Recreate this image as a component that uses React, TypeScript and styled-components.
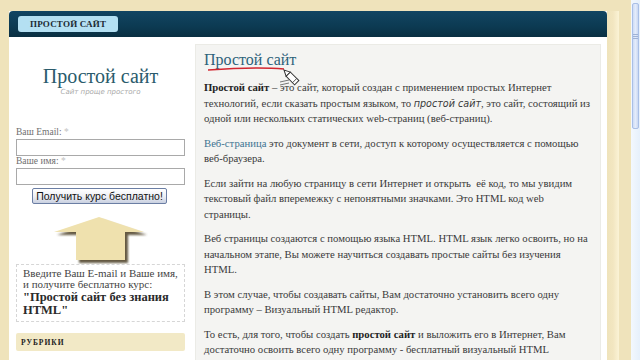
import React from "react";
import styled, { createGlobalStyle } from "styled-components";

const Global = createGlobalStyle`
  html, body { margin: 0; padding: 0; }
  body { width: 640px; height: 360px; overflow: hidden; background: #efe3bb; }
`;

const Screen = styled.div`
  display: flex;
  width: 640px;
  height: 360px;
  overflow: hidden;
  font-family: "Liberation Serif", "DejaVu Serif", serif;
`;

const LeftEdge = styled.div`
  width: 3px;
  background: linear-gradient(90deg, #8a9bd0, #5f72b0);
`;

const Page = styled.div`
  flex: 1;
  display: flex;
  padding: 11px 12px 0 9px;
  background: #efe3bb;
`;

const Wrapper = styled.div`
  width: 598px;
  display: flex;
  flex-direction: column;
  background: #fff;
  overflow: hidden;
`;

const Header = styled.div`
  flex-shrink: 0;
  height: 26px;
  display: flex;
  align-items: center;
  padding-left: 9px;
  border-radius: 4px 4px 0 0;
  background: linear-gradient(180deg, #124562 0%, #0c3a52 60%, #0a2f42 100%);
`;

const Tab = styled.div`
  height: 16px;
  padding: 0 12px;
  display: flex;
  align-items: center;
  border-radius: 3px;
  background: #b4e0f2;
  color: #1b2a33;
  font-size: 9px;
  font-weight: bold;
  letter-spacing: 0.2px;
`;

const Body = styled.div`
  flex: 1;
  display: grid;
  grid-template-columns: 186px 406px;
  align-items: start;
  padding-top: 7px;
`;

const Sidebar = styled.div`
  display: flex;
  flex-direction: column;
  padding: 20px 10px 0 7px;
`;

const SiteTitle = styled.div`
  text-align: center;
  font-size: 20px;
  color: #2a5b6c;
  line-height: 24px;
`;

const Slogan = styled.div`
  text-align: center;
  font-family: "DejaVu Sans", sans-serif;
  font-style: italic;
  font-size: 7px;
  color: #a9a9a9;
  margin-bottom: 31px;
`;

const Label = styled.div`
  font-size: 9.5px;
  color: #6f6f6f;
  line-height: 11px;
  span { color: #c3c3c3; }
`;

const Input = styled.div`
  height: 15px;
  border: 1px solid #a9a9a9;
  background: #fff;
  margin: 1px 0 0;
`;

const Button = styled.div`
  align-self: center;
  margin: 3px 0 0 -2px;
  width: 133px;
  height: 14px;
  border: 1px solid #6b7ea4;
  border-radius: 2px;
  background: linear-gradient(180deg, #ffffff 0%, #eceef4 55%, #c9d0e0 100%);
  font-family: "Liberation Sans", Arial, sans-serif;
  font-size: 10.5px;
  line-height: 14px;
  text-align: center;
  color: #111;
`;

const ArrowWrap = styled.div`
  height: 48px;
  margin-top: 12px;
  display: flex;
  justify-content: center;
`;

const Promo = styled.div`
  border: 1px dashed #d6d6d6;
  padding: 3px 6px 4px;
  font-size: 11px;
  line-height: 11px;
  color: #444;
  b {
    display: block;
    font-size: 12.5px;
    line-height: 13px;
    color: #2a2a2a;
    margin-top: 1px;
  }
`;

const Rubric = styled.div`
  margin-top: 11px;
  height: 18px;
  display: flex;
  align-items: center;
  padding-left: 5px;
  border-radius: 2px;
  background: #f2e9c6;
  font-size: 7.5px;
  font-weight: bold;
  letter-spacing: 1px;
  color: #222;
`;

const Content = styled.div`
  position: relative;
  height: 400px;
  background: #f4f4f2;
  border: 1px solid #ebebe6;
  border-bottom: none;
  padding: 4px 2px 0 8px;
`;

const Title = styled.h1`
  margin: 0 0 9px;
  font-size: 16px;
  font-weight: normal;
  line-height: 22px;
  color: #2d627a;
`;

const P = styled.p`
  margin: 0 0 9px;
  font-size: 10.7px;
  line-height: 15.5px;
  color: #3a3a3a;
  white-space: nowrap;
  b { color: #222; }
  i { font-family: "DejaVu Sans", sans-serif; font-size: 9.6px; }
  a { color: #3d7391; text-decoration: none; }
`;

const Marks = styled.svg`
  position: absolute;
  left: 0;
  top: 0;
  overflow: visible;
`;

const Gutter = styled.div`
  width: 12px;
  background: linear-gradient(90deg, #efe3bb 0%, #f2e6c0 50%, #fbf3d6 100%);
`;

const Scrollbar = styled.div`
  width: 18px;
  display: flex;
  background: #eef5fd;
`;

const Track = styled.div`
  flex: 1;
  padding: 3px 1px 0 1px;
  background: linear-gradient(90deg, #f3f8fe, #e6f0fb);
`;

const Thumb = styled.div`
  height: 124px;
  border: 1px solid #a9bfe6;
  border-radius: 2px;
  background: linear-gradient(90deg, #cddcf7, #e4ecfb 50%, #c9d8f3);
  display: flex;
  align-items: center;
  justify-content: center;
  &::after {
    content: "";
    width: 5px;
    height: 5px;
    margin-top: -60px;
    background: repeating-linear-gradient(180deg, #9fb2d6 0 1px, transparent 1px 2px);
  }
`;

const DarkEdge = styled.div`
  width: 4px;
  background: #4a5a86;
`;

const Arrow = () => (
  <svg width="100" height="48" viewBox="0 0 100 48">
    <defs>
      <filter id="sh" x="-20%" y="-20%" width="150%" height="150%">
        <feGaussianBlur stdDeviation="1" />
      </filter>
    </defs>
    <polygon
      points="3,16 48,1 93,16 74,16 74,44 25,44 25,16"
      fill="#4a3c22"
      transform="translate(3,3)"
      filter="url(#sh)"
      opacity="0.85"
    />
    <polygon points="3,16 48,1 93,16 74,16 74,44 25,44 25,16" fill="#efe1ae" />
  </svg>
);

// pencil with its tip at the origin, body running down-right
const Pencil = () => (
  <g transform="translate(88,25) rotate(-45)">
    <polygon points="0,0 -3,6 3,6" fill="#fff" stroke="#333" strokeWidth="1" />
    <rect x="-3" y="6" width="6" height="12" fill="#fff" stroke="#333" strokeWidth="1" />
    <line x1="-3" y1="15" x2="3" y2="15" stroke="#333" strokeWidth="0.8" />
  </g>
);

export default function App() {
  return (
    <>
      <Global />
      <Screen>
        <LeftEdge />
        <Page>
          <Wrapper>
            <Header>
              <Tab>ПРОСТОЙ САЙТ</Tab>
            </Header>
            <Body>
              <Sidebar>
                <SiteTitle>Простой сайт</SiteTitle>
                <Slogan>Сайт проще простого</Slogan>
                <Label>
                  Ваш Email: <span>*</span>
                </Label>
                <Input />
                <Label>
                  Ваше имя: <span>*</span>
                </Label>
                <Input />
                <Button>Получить курс бесплатно!</Button>
                <ArrowWrap>
                  <Arrow />
                </ArrowWrap>
                <Promo>
                  Введите Ваш E-mail и Ваше имя, и получите бесплатно курс:
                  <b>"Простой сайт без знания HTML"</b>
                </Promo>
                <Rubric>РУБРИКИ</Rubric>
              </Sidebar>
              <Content>
                <Title>Простой сайт</Title>
                <P>
                  <b>Простой сайт</b> – это сайт, который создан с применением простых Интернет
                  <br />
                  технологий, если сказать простым языком, то <i>простой сайт</i>, это сайт, состоящий из
                  <br />
                  одной или нескольких статических web-страниц (веб-страниц).
                </P>
                <P>
                  <a>Веб-страница</a> это документ в сети, доступ к которому осуществляется с помощью
                  <br />
                  веб-браузера.
                </P>
                <P>
                  Если зайти на любую страницу в сети Интернет и открыть&nbsp; её код, то мы увидим
                  <br />
                  текстовый файл вперемежку с непонятными значками. Это HTML код web
                  <br />
                  страницы.
                </P>
                <P>
                  Веб страницы создаются с помощью языка HTML. HTML язык легко освоить, но на
                  <br />
                  начальном этапе, Вы можете научиться создавать простые сайты без изучения
                  <br />
                  HTML.
                </P>
                <P>
                  В этом случае, чтобы создавать сайты, Вам достаточно установить всего одну
                  <br />
                  программу – Визуальный HTML редактор.
                </P>
                <P>
                  То есть, для того, чтобы создать <b>простой сайт</b> и выложить его в Интернет, Вам
                  <br />
                  достаточно освоить всего одну программу - бесплатный визуальный HTML
                  <br />
                  редактор.
                </P>
                <Marks width="406" height="100">
                  <path
                    d="M12,25 C40,23 65,22 88,24"
                    stroke="#d22630"
                    strokeWidth="1.6"
                    fill="none"
                  />
                  <path d="M84,37 L93,35 M84,40 L93,38" stroke="#555" strokeWidth="0.8" />
                  <Pencil />
                </Marks>
              </Content>
            </Body>
          </Wrapper>
          <Gutter />
        </Page>
        <Scrollbar>
          <Track>
            <Thumb />
          </Track>
          <DarkEdge />
        </Scrollbar>
      </Screen>
    </>
  );
}
